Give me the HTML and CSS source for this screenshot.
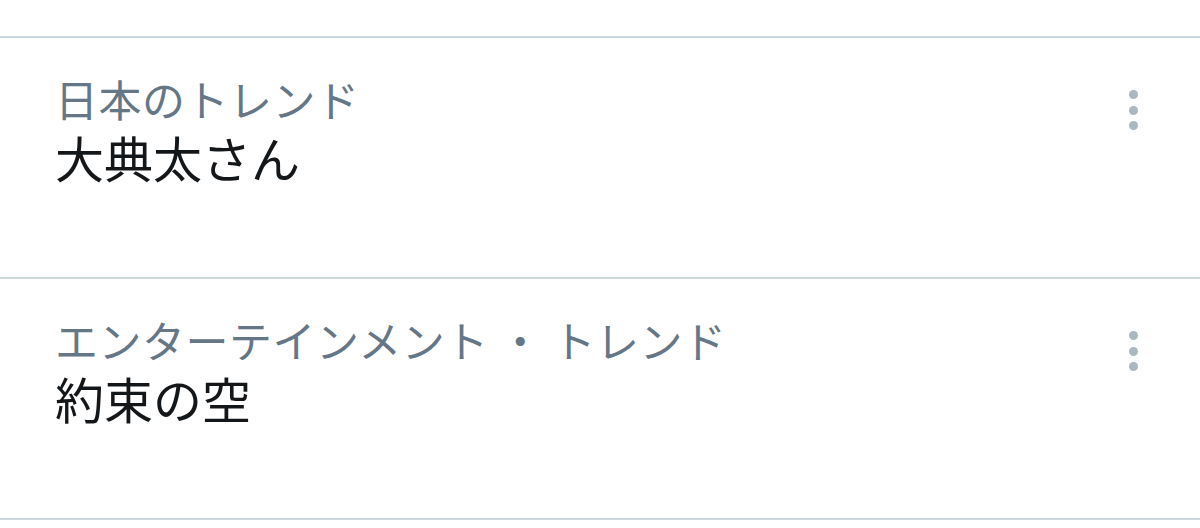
FILE: index.html
```html
<!DOCTYPE html>
<html lang="ja">
<head>
<meta charset="utf-8">
<link rel="stylesheet" href="styles.css">
</head>
<body>
<div class="list">
  <div class="trend">
    <div class="text">
      <div class="cat">日本のトレンド</div>
      <div class="title">大典太さん</div>
    </div>
    <div class="more"><span></span><span></span><span></span></div>
  </div>
  <div class="trend">
    <div class="text">
      <div class="cat">エンターテインメント ・ トレンド</div>
      <div class="title">約束の空</div>
    </div>
    <div class="more"><span></span><span></span><span></span></div>
  </div>
</div>
</body>
</html>
```
FILE: styles.css
```css
html, body {
  margin: 0;
  padding: 0;
  background: #ffffff;
}
body {
  font-family: "Noto Sans CJK JP", "Noto Sans", sans-serif;
  width: 1200px;
  height: 528px;
  overflow: hidden;
}
.list {
  margin-top: 36px;
  border-top: 2px solid #ccd6dd;
}
.trend {
  height: 239px;
  border-bottom: 2px solid #ccd6dd;
  display: flex;
  justify-content: space-between;
  align-items: flex-start;
  padding: 0 62px 0 55px;
}
.text {
  display: flex;
  flex-direction: column;
  padding-top: 32px;
}
.cat {
  font-size: 43px;
  line-height: 56px;
  color: #657786;
  white-space: pre;
  letter-spacing: 0.5px;
}
.title {
  font-size: 49px;
  line-height: 62px;
  color: #14171a;
}
.more {
  display: flex;
  flex-direction: column;
  gap: 6.5px;
  padding-top: 52px;
}
.more span {
  width: 9px;
  height: 9px;
  border-radius: 50%;
  background: #aab8c2;
}
```
